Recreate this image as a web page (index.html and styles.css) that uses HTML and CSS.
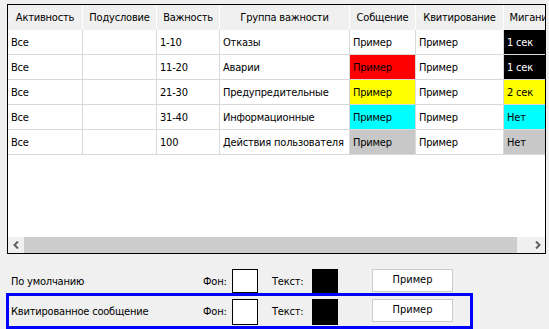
FILE: index.html
```html
<!DOCTYPE html>
<html lang="ru">
<head>
<meta charset="utf-8">
<title>Группы важности</title>
<link rel="stylesheet" href="styles.css">
</head>
<body>
<div class="grid-box">
  <div class="grid-view">
    <div class="grid">
      <div class="hd">Активность</div>
      <div class="hd">Подусловие</div>
      <div class="hd">Важность</div>
      <div class="hd">Группа важности</div>
      <div class="hd">Собщение</div>
      <div class="hd">Квитирование</div>
      <div class="hd">Мигание</div>

      <div class="c">Все</div><div class="c"></div><div class="c">1-10</div><div class="c">Отказы</div>
      <div class="c">Пример</div><div class="c">Пример</div><div class="c bg-black">1 сек</div>

      <div class="c">Все</div><div class="c"></div><div class="c">11-20</div><div class="c">Аварии</div>
      <div class="c bg-red">Пример</div><div class="c">Пример</div><div class="c bg-black">1 сек</div>

      <div class="c">Все</div><div class="c"></div><div class="c">21-30</div><div class="c">Предупредительные</div>
      <div class="c bg-yellow">Пример</div><div class="c">Пример</div><div class="c bg-yellow">2 сек</div>

      <div class="c">Все</div><div class="c"></div><div class="c">31-40</div><div class="c">Информационные</div>
      <div class="c bg-cyan">Пример</div><div class="c">Пример</div><div class="c bg-cyan">Нет</div>

      <div class="c">Все</div><div class="c"></div><div class="c">100</div><div class="c">Действия пользователя</div>
      <div class="c bg-gray">Пример</div><div class="c">Пример</div><div class="c bg-gray">Нет</div>
    </div>
  </div>
  <div class="hscroll">
    <div class="sb-btn">
      <svg width="7" height="8" viewBox="0 0 7 8"><path d="M5 0.5 L1.5 4 L5 7.5" fill="none" stroke="#606060" stroke-width="2"/></svg>
    </div>
    <div class="sb-thumb"></div>
    <div class="sb-track"></div>
    <div class="sb-btn">
      <svg width="7" height="8" viewBox="0 0 7 8"><path d="M2 0.5 L5.5 4 L2 7.5" fill="none" stroke="#606060" stroke-width="2"/></svg>
    </div>
  </div>
</div>

<div class="row row-default">
  <span class="label">По умолчанию</span>
  <span class="cap cap-bg">Фон:</span>
  <span class="swatch sw-white"></span>
  <span class="cap cap-text">Текст:</span>
  <span class="swatch sw-black"></span>
  <button class="sample">Пример</button>
</div>

<div class="row row-ack">
  <span class="label">Квитированное сообщение</span>
  <span class="cap cap-bg">Фон:</span>
  <span class="swatch sw-white tall"></span>
  <span class="cap cap-text">Текст:</span>
  <span class="swatch sw-black tall"></span>
  <button class="sample">Пример</button>
</div>
</body>
</html>
```
FILE: styles.css
```css
* { box-sizing: border-box; }
html, body {
  margin: 0;
  padding: 0;
  background: #f0f0f0;
  font-family: "DejaVu Sans Condensed", "Liberation Sans", sans-serif;
  font-size: 11px;
  letter-spacing: -0.2px;
  color: #000;
  overflow: hidden;
}
.grid-box {
  margin: 4px 0 0 7px;
  width: 539px;
  height: 250px;
  border: 1px solid #000;
  background: #fff;
  display: flex;
  flex-direction: column;
}
.grid-view {
  flex: 1;
  overflow: hidden;
}
.grid {
  display: grid;
  grid-template-columns: 75px 74px 63px 130px 66px 88px 56px;
  grid-auto-rows: 25px;
  width: 552px;
}
.hd {
  background: #f0f0f0;
  border-right: 1px solid #fff;
  display: flex;
  align-items: center;
  justify-content: center;
  white-space: nowrap;
  padding-bottom: 1px;
}
.c {
  border-right: 1px solid #d9d9d9;
  border-bottom: 1px solid #d9d9d9;
  background-clip: padding-box;
  display: flex;
  align-items: center;
  padding-left: 3px;
  white-space: nowrap;
  overflow: hidden;
}
.bg-black { background-color: #000; color: #fff; }
.bg-red { background-color: #ff0000; }
.bg-yellow { background-color: #ffff00; }
.bg-cyan { background-color: #00ffff; }
.bg-gray { background-color: #c8c8c8; }

.hscroll {
  height: 16px;
  display: flex;
  background: #f0f0f0;
}
.sb-btn {
  width: 16px;
  display: flex;
  align-items: center;
  justify-content: center;
}
.sb-thumb {
  width: 493px;
  background: #cdcdcd;
}
.sb-track { flex: 1; }

.row {
  display: flex;
  align-items: flex-start;
  white-space: nowrap;
}
.row-default {
  margin: 15px 0 0 0;
  padding-left: 11px;
  height: 24px;
}
.row-ack {
  margin-left: 6px;
  width: 467px;
  height: 36px;
  border: 3px solid #0000ff;
  padding: 3px 0 0 2px;
}
.label {
  width: 192px;
  line-height: 25px;
}
.cap { line-height: 25px; }
.cap-bg { width: 29px; }
.cap-text { width: 40px; margin-left: 14px; }
.swatch {
  width: 26px;
  height: 24px;
  border: 1px solid #000;
}
.swatch.tall { height: 26px; }
.sw-white { background: #fff; }
.sw-black { background: #000; }
.sample {
  margin-left: 34px;
  width: 81px;
  height: 23px;
  border: 1px solid #cccccc;
  background: #fff;
  font: inherit;
  color: #000;
  padding: 0 0 2px 0;
}
```
